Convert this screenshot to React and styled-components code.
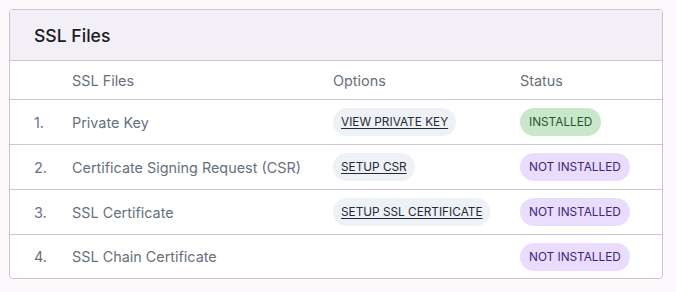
import React from 'react';
import styled, { createGlobalStyle } from 'styled-components';

const GlobalStyle = createGlobalStyle`
  body {
    margin: 0;
    background: #fdf8fc;
    font-family: Inter, 'Noto Sans', sans-serif;
  }
  * {
    box-sizing: border-box;
  }
`;

const Page = styled.div`
  padding: 9px 13px 13px 9px;
`;

const Card = styled.div`
  border: 1px solid #cbc6cf;
  border-radius: 4px;
  background: #fff;
  overflow: hidden;
`;

const CardHeader = styled.div`
  background: #f3eff7;
  border-bottom: 1px solid #cbc6cf;
  height: 51px;
  display: flex;
  align-items: center;
  padding-left: 24px;
  font-size: 17.6px;
  font-weight: 500;
  color: #1d1b20;
`;

const Row = styled.div`
  display: grid;
  grid-template-columns: 38px 261px 187px 1fr;
  align-items: center;
  padding-left: 24px;
  height: ${(p) => p.$h}px;
  font-size: 14.4px;
  color: #67717e;
  & + & {
    border-top: 1px solid #cbc6cf;
  }
`;

const Pill = styled.span`
  justify-self: start;
  display: inline-flex;
  align-items: center;
  height: 28px;
  padding: 0 8px;
  border-radius: 14px;
  font-size: 11.8px;
  font-weight: 400;
  text-transform: uppercase;
`;

const ActionPill = styled(Pill)`
  background: #eef1f6;
  color: #262934;
  text-decoration: underline;
  text-underline-offset: 2px;
  cursor: pointer;
`;

const StatusPill = styled(Pill)`
  padding: 0 9px;
  background: ${(p) => (p.$ok ? '#c9e7cb' : '#eadcfd')};
  color: ${(p) => (p.$ok ? '#1e5a27' : '#35297e')};
`;

const files = [
  { name: 'Private Key', action: 'View Private Key', ok: true },
  { name: 'Certificate Signing Request (CSR)', action: 'Setup CSR', ok: false },
  { name: 'SSL Certificate', action: 'Setup SSL Certificate', ok: false },
  { name: 'SSL Chain Certificate', action: null, ok: false },
];

export default function App() {
  return (
    <>
      <GlobalStyle />
      <Page>
        <Card>
          <CardHeader>SSL Files</CardHeader>
          <Row $h={38}>
            <span />
            <span>SSL Files</span>
            <span>Options</span>
            <span>Status</span>
          </Row>
          {files.map((f, i) => (
            <Row key={f.name} $h={i === 3 ? 44 : 45}>
              <span>{i + 1}.</span>
              <span>{f.name}</span>
              {f.action ? <ActionPill>{f.action}</ActionPill> : <span />}
              <StatusPill $ok={f.ok}>{f.ok ? 'Installed' : 'Not Installed'}</StatusPill>
            </Row>
          ))}
        </Card>
      </Page>
    </>
  );
}
